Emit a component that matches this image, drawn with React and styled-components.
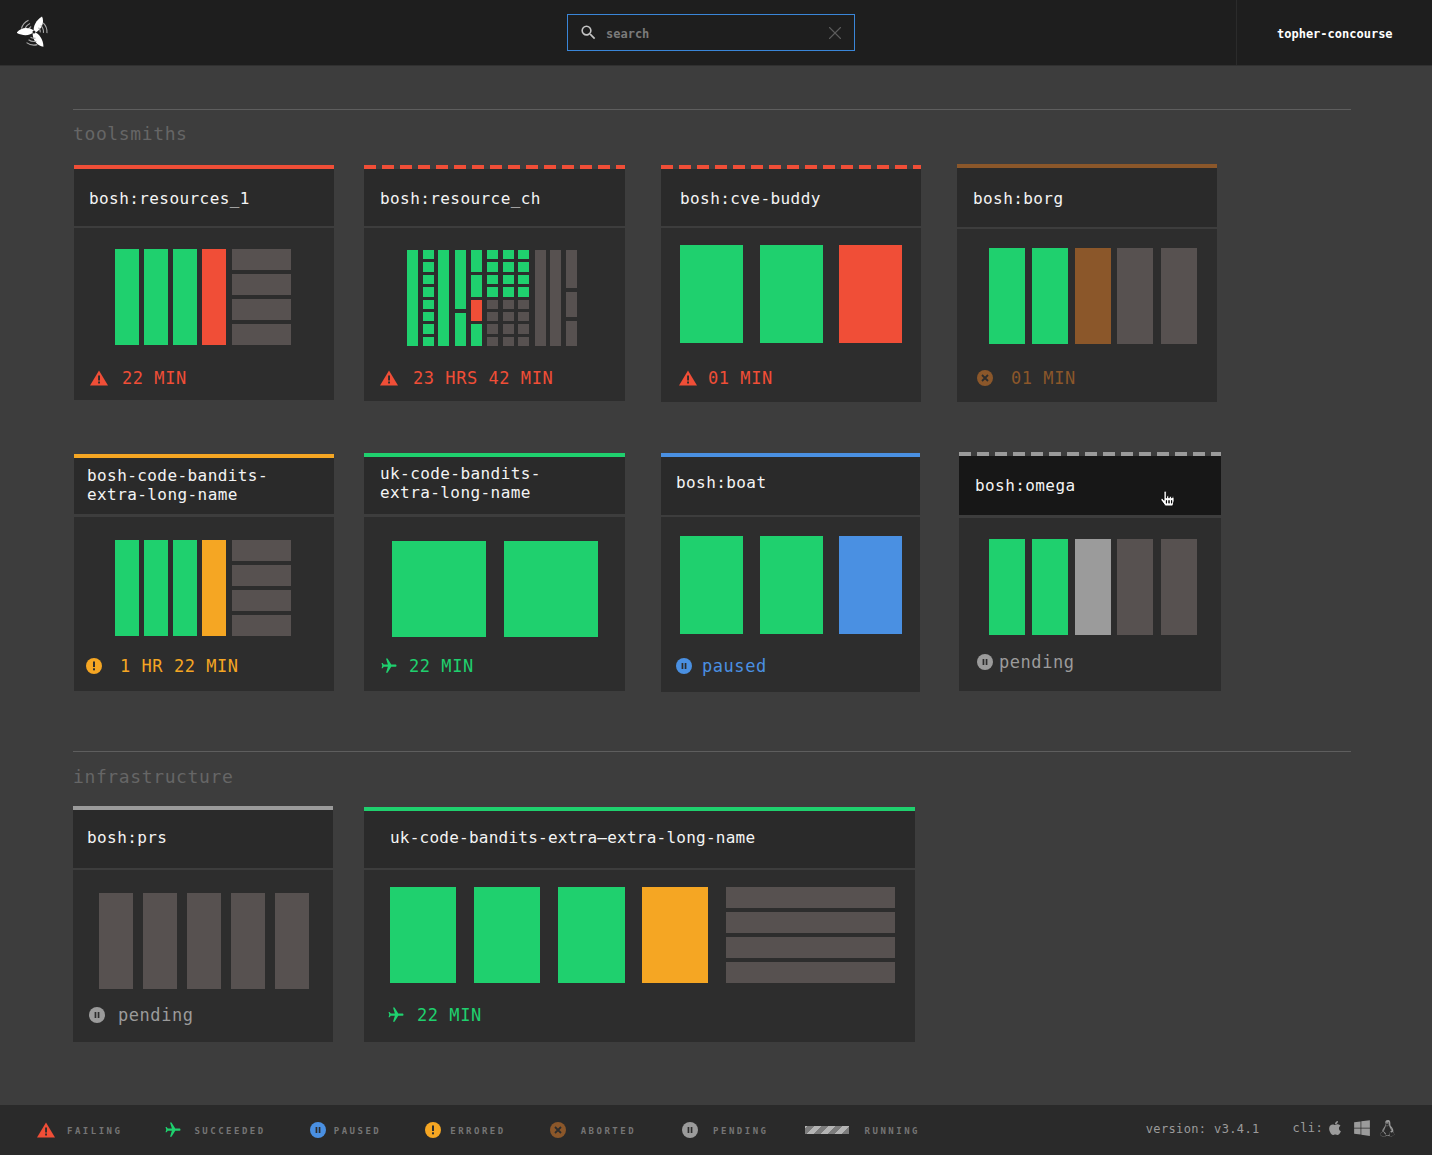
import React from "react";
import styled, { createGlobalStyle } from "styled-components";
import { X } from "lucide-react";
import { FaApple, FaWindows, FaLinux, FaHandPointer } from "react-icons/fa";
import { MdFlight, MdSearch } from "react-icons/md";

const GREEN = "#1fd06e";
const RED = "#f04e37";
const ORANGE = "#f5a623";
const BLUE = "#4a90e2";
const GREY = "#9b9b9b";
const BROWN = "#8b572a";
const DARK = "#575150";
const MONO = `"DejaVu Sans Mono", "Liberation Mono", monospace`;

const GlobalStyle = createGlobalStyle`
  html, body {
    margin: 0;
    padding: 0;
    background: #3d3d3d;
  }
  * {
    box-sizing: border-box;
  }
`;

const Page = styled.div`
  min-height: 100vh;
  display: flex;
  flex-direction: column;
  font-family: ${MONO};
`;

// Header
const Header = styled.header`
  height: 66px;
  flex: none;
  display: flex;
  align-items: stretch;
  background: #1e1e1e;
  border-bottom: 1px solid #303030;
`;

const LogoWrap = styled.div`
  width: 34px;
  margin-left: 17px;
  display: flex;
  align-items: center;
  padding-bottom: 1px;
`;

const SearchBox = styled.div`
  width: 288px;
  height: 37px;
  margin: 14px 0 0 516px;
  padding: 0 8px 0 11px;
  display: flex;
  align-items: center;
  border: 1px solid #3a86d8;
  color: #c4c4c4;
`;

const SearchInput = styled.input`
  flex: 1;
  min-width: 0;
  margin: 2px 0 0 8px;
  padding: 0;
  border: 0;
  outline: 0;
  background: transparent;
  color: #fff;
  font-family: ${MONO};
  font-size: 12px;
  font-weight: bold;

  &::placeholder {
    color: #7a7a7a;
    opacity: 1;
  }
`;

const ClearIcon = styled(X)`
  flex: none;
  color: #5c5c5c;
`;

const Account = styled.div`
  width: 196px;
  margin-left: auto;
  padding: 2px 0 0 40px;
  display: flex;
  align-items: center;
  border-left: 1px solid #2b2b2b;
  color: #fff;
  font-size: 12px;
  font-weight: bold;
`;

// Main
const Main = styled.main`
  flex: 1;
  padding: 43px 81px 0 73px;
`;

const Section = styled.section`
  margin-top: ${(p) => p.$top || 0}px;
  border-top: 1px solid #5e5e5e;
`;

const SectionName = styled.h2`
  margin: ${(p) => (p.$drop ? "13px 0 17px" : "12px 0 18px")};
  font-size: 18px;
  line-height: 24px;
  font-weight: normal;
  letter-spacing: 0.62px;
  color: #666;
`;

const Row = styled.div`
  display: flex;
  align-items: flex-start;
  margin-top: ${(p) => p.$top || 0}px;
`;

const Card = styled.article`
  flex: none;
  width: ${(p) => p.$width}px;
  margin-left: ${(p) => p.$left}px;
  margin-top: ${(p) => p.$top}px;
`;

const dashed = (color) =>
  `repeating-linear-gradient(90deg, ${color} 0 12px, transparent 12px 18px)`;

const TopBar = styled.div`
  height: 4px;
  background: ${(p) => (p.$dashed ? dashed(p.$color) : p.$color)};
`;

const Title = styled.div`
  position: relative;
  height: ${(p) => p.$height}px;
  padding: ${(p) => p.$drop || 0}px 8px ${(p) => p.$lift || 0}px ${(p) => p.$inset}px;
  display: flex;
  align-items: center;
  background: ${(p) => (p.$hover ? "#171717" : "#2a2a2a")};
  color: #f4f4f4;
  font-size: 16px;
  line-height: 19px;
  letter-spacing: ${(p) => (p.$tight ? "0.24px" : "0.42px")};
  white-space: pre-line;
`;

const Cursor = styled(FaHandPointer)`
  position: absolute;
  left: 201px;
  top: 35px;
  color: #fff;
  stroke: #000;
  stroke-width: 30px;
`;

const Body = styled.div`
  height: ${(p) => p.$height}px;
  margin-top: ${(p) => p.$gap}px;
  padding: ${(p) => p.$top}px 0 0 ${(p) => p.$left}px;
  background: #2d2d2d;
`;

const Chart = styled.div`
  display: flex;
  height: ${(p) => p.$height}px;
`;

const Column = styled.div`
  flex: none;
  width: ${(p) => p.$width}px;
  margin-left: ${(p) => p.$left}px;
  display: flex;
  flex-direction: column;
  gap: ${(p) => p.$gap || 0}px;
`;

const Cell = styled.div`
  flex: ${(p) => p.$grow} 1 0;
  background: ${(p) => p.$color};
`;

const Status = styled.div`
  height: 24px;
  margin-top: ${(p) => p.$top}px;
  margin-left: ${(p) => p.$left}px;
  display: flex;
  align-items: center;
  gap: ${(p) => p.$gap}px;
  color: ${(p) => p.$color};
  font-size: 17px;
  letter-spacing: 0.55px;
  white-space: nowrap;
`;

const PlaneIcon = styled(MdFlight)`
  flex: none;
  transform: rotate(90deg);
  color: ${(p) => p.$color};
`;

// Footer
const Footer = styled.footer`
  height: 50px;
  flex: none;
  padding: 0 36px 0 37px;
  display: flex;
  align-items: center;
  background: #2a2a2a;
  color: #9b9b9b;
`;

const Legend = styled.div`
  margin-left: ${(p) => p.$left}px;
  display: flex;
  align-items: center;
  gap: ${(p) => p.$gap}px;
`;

const LegendLabel = styled.span`
  padding-top: 2px;
  font-size: 9px;
  font-weight: bold;
  letter-spacing: 2.5px;
  color: #757575;
`;

const RunningBar = styled.div`
  width: 44px;
  height: 8px;
  background: repeating-linear-gradient(
    -45deg,
    #7c7c7c 0 5px,
    #b4b4b4 5px 10px
  );
`;

const Version = styled.span`
  margin-left: auto;
  padding-bottom: 3px;
  font-size: 12px;
  letter-spacing: 0.37px;
`;

const Cli = styled.div`
  margin-left: 33px;
  padding-bottom: 4px;
  display: flex;
  align-items: center;
  gap: 8px;
  font-size: 12px;
  letter-spacing: 0.37px;
`;

const AppleIcon = styled(FaApple)`
  margin: 0 2px 0 -4px;
`;

const bladeArcs = [
  "M-12.6 -3.4A13 13 0 0 1 -5.5 -11.8",
  "M-9.2 -2.5A9.5 9.5 0 0 1 -4 -8.6",
  "M-6 -1.8A6.3 6.3 0 0 1 -2.8 -5.6",
];

const Logo = () => (
  <svg width="34" height="34" viewBox="-17 -17 34 34">
    {[0, 120, 240].map((angle) => (
      <g key={angle} transform={`rotate(${angle})`}>
        <path d="M0 0C-1.5 -5 2 -12 8 -15.5C10.5 -10 8.5 -3 1 1Z" fill="#fff" />
        {bladeArcs.map((d) => (
          <path key={d} d={d} fill="none" stroke="#a8a8a8" strokeWidth="1.1" />
        ))}
      </g>
    ))}
    <circle r="1.5" fill="#1e1e1e" />
  </svg>
);

const StatusIcon = ({ kind, color, size = 16 }) => {
  const mark = "#2d2d2d";
  if (kind === "plane") return <PlaneIcon $color={color} size={size + 2} />;
  if (kind === "fail") {
    return (
      <svg width={size + 2} height={size} viewBox="0 0 18 16" style={{ flex: "none" }}>
        <path d="M9 0.5L18 15.5H0Z" fill={color} />
        <rect x="8.1" y="5.5" width="1.9" height="5" fill={mark} />
        <rect x="8.1" y="11.5" width="1.9" height="2" fill={mark} />
      </svg>
    );
  }
  return (
    <svg width={size} height={size} viewBox="0 0 16 16" style={{ flex: "none" }}>
      <circle cx="8" cy="8" r="8" fill={color} />
      {kind === "pause" && (
        <>
          <rect x="5.6" y="5" width="1.7" height="6" fill={mark} />
          <rect x="8.7" y="5" width="1.7" height="6" fill={mark} />
        </>
      )}
      {kind === "error" && (
        <>
          <rect x="7" y="3.5" width="2" height="5.5" fill={mark} />
          <rect x="7" y="10.3" width="2" height="2" fill={mark} />
        </>
      )}
      {kind === "abort" && (
        <path d="M5 5L11 11M11 5L5 11" stroke={mark} strokeWidth="1.8" />
      )}
    </svg>
  );
};

const solid = (width, left, color) => ({ width, left, cells: [[color, 1]] });
const stack = (width, left, colors, gap) => ({
  width,
  left,
  gap,
  cells: colors.map((c) => [c, 1]),
});

const fourTone = (main) => [
  solid(24, 0, GREEN),
  solid(24, 5, GREEN),
  solid(24, 5, GREEN),
  solid(24, 5, main),
  stack(59, 6, [DARK, DARK, DARK, DARK], 4),
];

const threeBig = (last) => [
  solid(63, 0, GREEN),
  solid(63, 17, GREEN),
  solid(63, 16, last),
];

const fiveSlim = (third) => [
  solid(36, 0, GREEN),
  solid(36, 7, GREEN),
  solid(36, 7, third),
  solid(36, 6, DARK),
  solid(36, 8, DARK),
];

const mixed = [GREEN, GREEN, GREEN, GREEN, DARK, DARK, DARK, DARK];

const busyChart = [
  solid(11, 0, GREEN),
  stack(11, 5, Array(8).fill(GREEN), 3),
  solid(11, 4, GREEN),
  { width: 11, left: 6, gap: 4, cells: [[GREEN, 58], [GREEN, 33]] },
  {
    width: 11,
    left: 5,
    gap: 3,
    cells: [[GREEN, 22], [GREEN, 22], [RED, 21], [GREEN, 22]],
  },
  stack(11, 5, mixed, 3),
  stack(11, 5, mixed, 3),
  stack(11, 4, mixed, 3),
  solid(11, 6, DARK),
  solid(11, 4, DARK),
  { width: 11, left: 5, gap: 4, cells: [[DARK, 38], [DARK, 25], [DARK, 25]] },
];

const sections = [
  {
    name: "toolsmiths",
    top: 0,
    rows: [
      {
        top: 0,
        cards: [
          {
            name: "bosh:resources_1", width: 260, left: 1, top: 1, bar: RED,
            titleH: 57, inset: 15, drop: 2, gap: 2, bodyH: 172, chartTop: 21, chartLeft: 41, chartH: 96,
            columns: fourTone(RED), statusTop: 21, statusLeft: 16, statusGap: 14,
            icon: "fail", color: RED, text: "22 MIN",
          },
          {
            name: "bosh:resource_ch", width: 261, left: 30, top: 1, bar: RED, dashed: true,
            titleH: 57, inset: 16, drop: 2, gap: 2, bodyH: 173, chartTop: 22, chartLeft: 43, chartH: 96,
            columns: busyChart, statusTop: 20, statusLeft: 16, statusGap: 15,
            icon: "fail", color: RED, text: "23 HRS 42 MIN",
          },
          {
            name: "bosh:cve-buddy", width: 260, left: 36, top: 1, bar: RED, dashed: true,
            titleH: 57, inset: 19, drop: 2, gap: 2, bodyH: 174, chartTop: 17, chartLeft: 19, chartH: 98,
            columns: threeBig(RED), statusTop: 23, statusLeft: 18, statusGap: 11,
            icon: "fail", color: RED, text: "01 MIN",
          },
          {
            name: "bosh:borg", width: 260, left: 36, top: 0, bar: BROWN,
            titleH: 59, inset: 16, drop: 1, gap: 2, bodyH: 173, chartTop: 19, chartLeft: 32, chartH: 96,
            columns: fiveSlim(BROWN), statusTop: 22, statusLeft: 20, statusGap: 18,
            icon: "abort", color: BROWN, text: "01 MIN",
          },
        ],
      },
      {
        top: 50,
        cards: [
          {
            name: "bosh-code-bandits-\nextra-long-name", width: 260, left: 1, top: 2, bar: ORANGE,
            titleH: 56, inset: 13, lift: 3, gap: 3, bodyH: 174, chartTop: 23, chartLeft: 41, chartH: 96,
            columns: fourTone(ORANGE), statusTop: 18, statusLeft: 12, statusGap: 18,
            icon: "error", color: ORANGE, text: "1 HR 22 MIN",
          },
          {
            name: "uk-code-bandits-\nextra-long-name", width: 261, left: 30, top: 1, bar: GREEN,
            titleH: 57, inset: 16, lift: 5, gap: 3, bodyH: 174, chartTop: 24, chartLeft: 28, chartH: 96,
            columns: [solid(94, 0, GREEN), solid(94, 18, GREEN)],
            statusTop: 17, statusLeft: 16, statusGap: 11,
            icon: "plane", color: GREEN, text: "22 MIN",
          },
          {
            name: "bosh:boat", width: 259, left: 36, top: 1, bar: BLUE,
            titleH: 58, inset: 15, lift: 8, gap: 2, bodyH: 175, chartTop: 19, chartLeft: 19, chartH: 98,
            columns: threeBig(BLUE), statusTop: 20, statusLeft: 15, statusGap: 10,
            icon: "pause", color: BLUE, text: "paused",
          },
          {
            name: "bosh:omega", width: 262, left: 39, top: 0, bar: GREY, dashed: true, hover: true,
            titleH: 59, inset: 16, gap: 3, bodyH: 173, chartTop: 21, chartLeft: 30, chartH: 96,
            columns: fiveSlim(GREY), statusTop: 15, statusLeft: 18, statusGap: 6,
            icon: "pause", color: GREY, text: "pending",
          },
        ],
      },
    ],
  },
  {
    name: "infrastructure",
    top: 59,
    drop: true,
    rows: [
      {
        top: 0,
        cards: [
          {
            name: "bosh:prs", width: 260, left: 0, top: 0, bar: GREY,
            titleH: 58, inset: 14, lift: 3, gap: 2, bodyH: 172, chartTop: 23, chartLeft: 26, chartH: 96,
            columns: [
              solid(34, 0, DARK), solid(34, 10, DARK), solid(34, 10, DARK),
              solid(34, 10, DARK), solid(34, 10, DARK),
            ],
            statusTop: 14, statusLeft: 16, statusGap: 13,
            icon: "pause", color: GREY, text: "pending",
          },
          {
            name: "uk-code-bandits-extra\u2014extra-long-name", width: 551, left: 31, top: 1, bar: GREEN, tight: true,
            titleH: 57, inset: 26, lift: 5, gap: 2, bodyH: 172, chartTop: 17, chartLeft: 26, chartH: 96,
            columns: [
              solid(66, 0, GREEN), solid(66, 18, GREEN), solid(67, 18, GREEN),
              solid(66, 17, ORANGE), stack(169, 18, [DARK, DARK, DARK, DARK], 4),
            ],
            statusTop: 20, statusLeft: 23, statusGap: 12,
            icon: "plane", color: GREEN, text: "22 MIN",
          },
        ],
      },
    ],
  },
];

const legend = [
  { left: 0, gap: 12, icon: "fail", color: RED, size: 16, label: "FAILING" },
  { left: 42, gap: 12, icon: "plane", color: GREEN, size: 16, label: "SUCCEEDED" },
  { left: 44, gap: 8, icon: "pause", color: BLUE, size: 16, label: "PAUSED" },
  { left: 44, gap: 9, icon: "error", color: ORANGE, size: 16, label: "ERRORED" },
  { left: 44, gap: 15, icon: "abort", color: BROWN, size: 16, label: "ABORTED" },
  { left: 46, gap: 15, icon: "pause", color: GREY, size: 16, label: "PENDING" },
];

const PipelineCard = ({ card }) => (
  <Card $width={card.width} $left={card.left} $top={card.top}>
    <TopBar $color={card.bar} $dashed={card.dashed} />
    <Title
      $height={card.titleH}
      $inset={card.inset}
      $lift={card.lift}
      $drop={card.drop}
      $hover={card.hover}
      $tight={card.tight}
    >
      {card.name}
      {card.hover && <Cursor size={15} />}
    </Title>
    <Body
      $height={card.bodyH}
      $gap={card.gap}
      $top={card.chartTop}
      $left={card.chartLeft}
    >
      <Chart $height={card.chartH}>
        {card.columns.map((col, i) => (
          <Column key={i} $width={col.width} $left={col.left} $gap={col.gap}>
            {col.cells.map(([color, grow], j) => (
              <Cell key={j} $color={color} $grow={grow} />
            ))}
          </Column>
        ))}
      </Chart>
      <Status
        $top={card.statusTop}
        $left={card.statusLeft - card.chartLeft}
        $gap={card.statusGap}
        $color={card.color}
      >
        <StatusIcon kind={card.icon} color={card.color} />
        {card.text}
      </Status>
    </Body>
  </Card>
);

const App = () => (
  <Page>
    <GlobalStyle />
    <Header>
      <LogoWrap>
        <Logo />
      </LogoWrap>
      <SearchBox>
        <MdSearch size={19} />
        <SearchInput placeholder="search" />
        <ClearIcon size={22} strokeWidth={1.2} />
      </SearchBox>
      <Account>topher-concourse</Account>
    </Header>

    <Main>
      {sections.map((section) => (
        <Section key={section.name} $top={section.top}>
          <SectionName $drop={section.drop}>{section.name}</SectionName>
          {section.rows.map((row, i) => (
            <Row key={i} $top={row.top}>
              {row.cards.map((card) => (
                <PipelineCard key={card.name} card={card} />
              ))}
            </Row>
          ))}
        </Section>
      ))}
    </Main>

    <Footer>
      {legend.map((item) => (
        <Legend key={item.label} $left={item.left} $gap={item.gap}>
          <StatusIcon kind={item.icon} color={item.color} size={item.size} />
          <LegendLabel>{item.label}</LegendLabel>
        </Legend>
      ))}
      <Legend $left={36} $gap={16}>
        <RunningBar />
        <LegendLabel>RUNNING</LegendLabel>
      </Legend>
      <Version>version: v3.4.1</Version>
      <Cli>
        cli:
        <AppleIcon size={16} />
        <FaWindows size={18} />
        <FaLinux size={17} />
      </Cli>
    </Footer>
  </Page>
);

export default App;
